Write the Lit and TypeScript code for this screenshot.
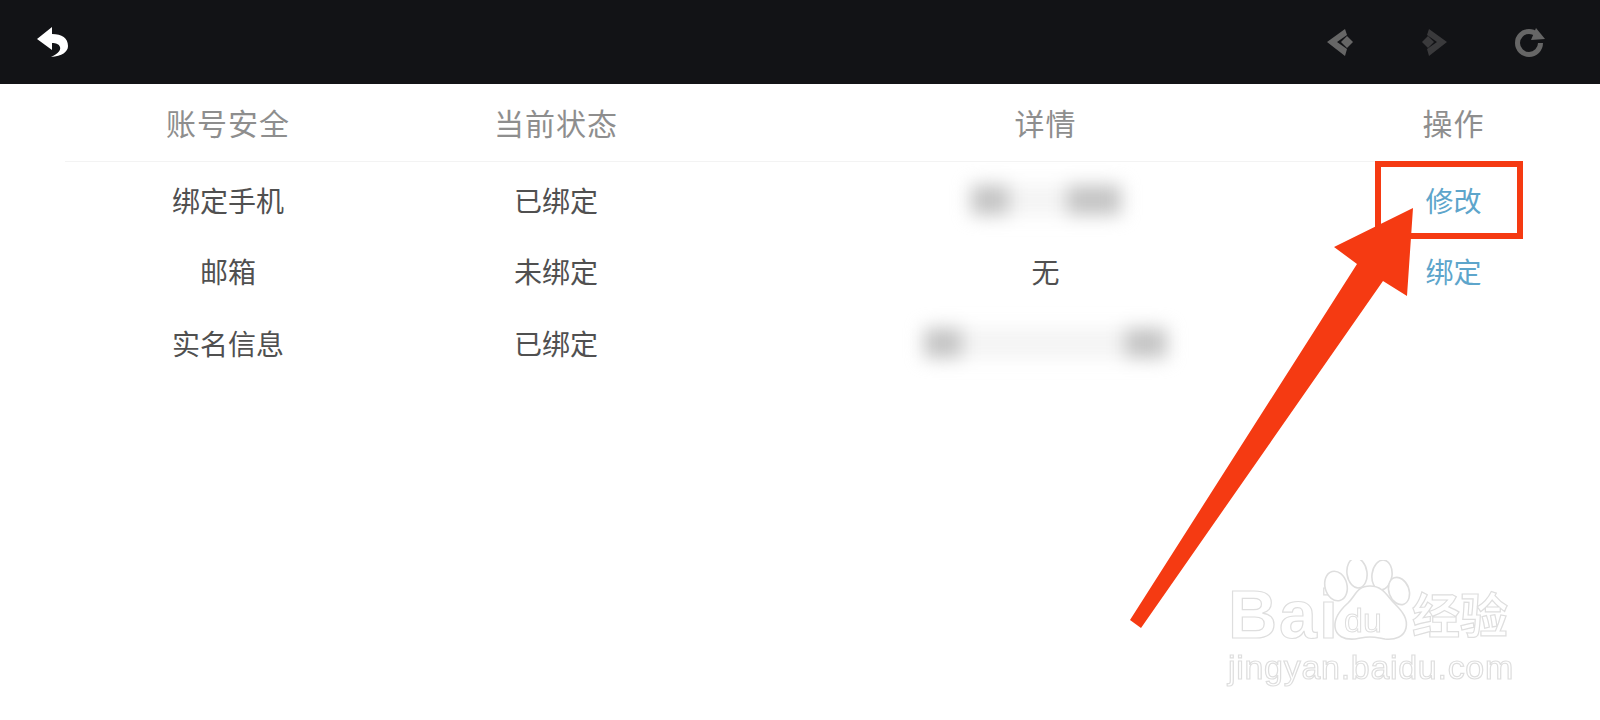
import { LitElement, html, css } from "lit";
import { customElement } from "lit/decorators.js";

const rows = [
  { name: "绑定手机", status: "已绑定", detail: "", action: "修改", blur: "a" },
  { name: "邮箱", status: "未绑定", detail: "无", action: "绑定", blur: "" },
  { name: "实名信息", status: "已绑定", detail: "", action: "", blur: "b" },
];

@customElement("app-root")
export class AppRoot extends LitElement {
  static styles = css`
    :host {
      display: block;
      width: 1600px;
      height: 720px;
      position: relative;
      overflow: hidden;
      background: #fff;
      font-family: "Noto Sans CJK SC", "Liberation Sans", sans-serif;
    }
    .bar {
      height: 84px;
      background: #121316;
      display: flex;
      align-items: center;
      padding: 0 50px 0 32px;
    }
    .bar svg { width: 40px; height: 40px; display: block; }
    .spacer { flex: 1; }
    .nav { display: flex; gap: 55px; }
    .table { margin: 0 78px 0 65px; }
    .grid {
      display: grid;
      grid-template-columns: 326px 330px 649px 167px;
      text-align: center;
    }
    .head {
      height: 78px;
      padding-bottom: 2px;
      align-items: center;
      font-size: 30px;
      letter-spacing: 1px;
      color: #8e8e8e;
      border-bottom: 1px solid #f3f3f3;
      box-sizing: border-box;
    }
    .row {
      height: 71.5px;
      align-items: center;
      font-size: 28px;
      color: #505050;
    }
    .body { padding-top: 2px; }
    .action { color: #5da5cb; }
    .detail { height: 100%; display: flex; align-items: center; justify-content: center; }
    .smear { display: flex; align-items: center; justify-content: space-between; height: 30px; background: #f4f4f4; filter: blur(9px); }
    .smear i { display: block; height: 30px; background: #c4c4c4; }
    .smear.a { width: 150px; }
    .smear.a i:first-child { width: 38px; }
    .smear.a i:last-child { width: 54px; }
    .smear.b { width: 243px; }
    .smear.b i:first-child { width: 38px; }
    .smear.b i:last-child { width: 42px; }
    .overlay { position: absolute; left: 0; top: 0; width: 1600px; height: 720px; pointer-events: none; }
    .mark { position: absolute; left: 1228px; top: 560px; width: 300px; height: 130px; color: #fff; -webkit-text-stroke: 1.2px #dedede; white-space: nowrap; line-height: 1; filter: blur(0.5px); }
    .mark span { position: absolute; }
    .mark .bai { left: 0; top: 20px; font: 700 68px/68px "Liberation Sans", sans-serif; letter-spacing: 2px; }
    .mark .cn { left: 184px; top: 28px; font: 700 48px/48px "Noto Sans CJK SC", sans-serif; }
    .mark .url { left: 0; top: 90px; font: 400 34px/34px "Liberation Sans", sans-serif; letter-spacing: 0.7px; }
    .mark svg { position: absolute; left: 0; top: 0; width: 300px; height: 130px; }
  `;

  private watermark() {
    return html`<div class="mark">
      <span class="bai">Bai</span>
      <svg viewBox="1228 560 300 130" fill="#fff" stroke="#dedede" stroke-width="1.6">
        <ellipse cx="1336" cy="586" rx="11" ry="15" transform="rotate(-15 1336 586)"></ellipse>
        <ellipse cx="1357" cy="573" rx="10" ry="15" transform="rotate(-8 1357 573)"></ellipse>
        <ellipse cx="1382" cy="575" rx="10" ry="15" transform="rotate(8 1382 575)"></ellipse>
        <ellipse cx="1399" cy="591" rx="10" ry="14" transform="rotate(-20 1399 591)"></ellipse>
        <path d="M1370 586c13 0 17 10 25 18 8 8 13 15 11 24-2 9-11 12-21 11-6-1-10-2-15-2s-9 1-15 2c-11 1-19-3-20-12-1-9 4-16 13-24 8-8 9-17 22-17z"></path>
        <text x="1344" y="632" stroke-width="1" style="font:400 34px 'Liberation Sans',sans-serif">du</text>
      </svg>
      <span class="cn">经验</span>
      <span class="url">jingyan.baidu.com</span>
    </div>`;
  }

  render() {
    return html`
      <div class="bar">
        <svg viewBox="32 22 40 40"><path fill="#fff" d="M37 39L52 27V34C62 34 68 38 68 46C68 52 62 56 51 57C58 54 61 50 60 47C59 44 56 43 52 43V50Z"/></svg>
        <div class="spacer"></div>
        <div class="nav">
          <svg viewBox="1320 22 40 40"><path fill="#666" d="M1327 42L1345 29L1347 35L1337 42L1347 49L1345 56Z"/><path fill="#666" d="M1341 42L1347 36L1353 42L1347 48Z"/></svg>
          <svg viewBox="1415 22 40 40"><path fill="#3a3a3c" d="M1447 42L1429 29L1427 35L1437 42L1427 49L1429 56Z"/><path fill="#3a3a3c" d="M1434 42L1428 36L1422 42L1428 48Z"/></svg>
          <svg viewBox="1510 22 40 40"><circle cx="1529" cy="43" r="11.5" fill="none" stroke="#666" stroke-width="5" stroke-dasharray="62 10.3"/><path fill="#666" d="M1536 28L1545 39L1531 40Z"/></svg>
        </div>
      </div>
      <div class="table">
        <div class="grid head"><div>账号安全</div><div>当前状态</div><div>详情</div><div>操作</div></div>
        <div class="body">
          ${rows.map(
            (r) => html`<div class="grid row">
              <div>${r.name}</div>
              <div>${r.status}</div>
              <div class="detail">${r.blur
                ? html`<div class="smear ${r.blur}"><i></i><i></i></div>`
                : r.detail}</div>
              <div class="action">${r.action}</div>
            </div>`
          )}
        </div>
      </div>
      ${this.watermark()}
      <svg class="overlay" viewBox="0 0 1600 720">
        <rect x="1378" y="164" width="142" height="72" fill="none" stroke="#f53a12" stroke-width="6"></rect>
        <path fill="#f53a12" d="M1413 208L1334 247L1357 264L1130 620L1141 628L1383 281L1407 296Z"></path>
      </svg>
    `;
  }
}
